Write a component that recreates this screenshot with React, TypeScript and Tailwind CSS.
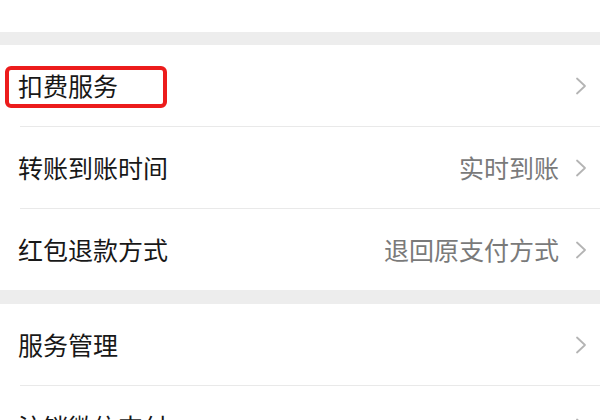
import React from "react";

const Chevron = () => (
  <svg width="12" height="18" viewBox="0 0 12 18" fill="none" className="shrink-0">
    <path d="M2 1.5 L10 9 L2 16.5" stroke="#b4b4b4" strokeWidth="1.8" strokeLinecap="round" strokeLinejoin="round" />
  </svg>
);

type RowProps = { label: string; value?: string; divider?: boolean; highlight?: boolean };

const Row = ({ label, value, divider, highlight }: RowProps) => (
  <div className="relative">
    <div className="flex h-[81px] items-center justify-between pl-[18px] pr-[13px]">
      <span className="text-[25px] leading-none text-[#181818]">{label}</span>
      <div className="flex items-center gap-[16px]">
        {value && <span className="text-[25px] leading-none text-[#7a7a7a]">{value}</span>}
        <Chevron />
      </div>
    </div>
    {divider && <div className="ml-[20px] h-px bg-[#e9e9e9]" />}
    {highlight && (
      <div className="absolute left-[5px] top-[21px] h-[42px] w-[162px] rounded-[6px] border-[4px] border-[#ec1c1c]" />
    )}
  </div>
);

export default function App() {
  return (
    <div
      className="h-[420px] w-[600px] overflow-hidden bg-white"
      style={{ fontFamily: '"Noto Sans CJK SC", "Noto Sans", sans-serif' }}
    >
      <div className="h-[32px] bg-white" />
      <div className="h-[13px] bg-[#ededed]" />
      <Row label="扣费服务" divider highlight />
      <Row label="转账到账时间" value="实时到账" divider />
      <Row label="红包退款方式" value="退回原支付方式" />
      <div className="h-[14px] bg-[#ededed]" />
      <Row label="服务管理" divider />
      <Row label="注销微信支付" />
    </div>
  );
}
